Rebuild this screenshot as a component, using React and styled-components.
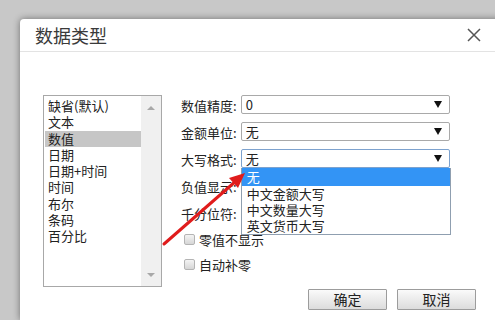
import React from "react";
import styled, { createGlobalStyle } from "styled-components";

const Global = createGlobalStyle`
  html, body { margin: 0; padding: 0; }
  body {
    background: #c8c8c8;
    overflow: hidden;
    width: 495px;
    height: 320px;
    font-family: "Noto Sans CJK SC", "Noto Sans", sans-serif;
    color: #333;
  }
`;

const Page = styled.div`
  position: relative;
  padding: 19px 0 0 20px;
  width: 495px;
  height: 320px;
  box-sizing: border-box;
  overflow: hidden;
`;

const Dialog = styled.div`
  width: 490px;
  height: 301px;
  background: #fff;
  border-radius: 4px 0 0 0;
  box-shadow: 0 0 7px rgba(0, 0, 0, 0.45);
  display: flex;
  flex-direction: column;
`;

const TitleBar = styled.div`
  height: 33px;
  box-sizing: border-box;
  border-bottom: 1px solid #e3e3e3;
  display: flex;
  align-items: center;
  justify-content: space-between;
  padding: 0 29px 0 15px;
`;

const Title = styled.div`
  font-size: 18px;
  color: #3a3a3a;
  line-height: 1;
  margin-top: -1px;
`;

const Close = styled.svg`
  width: 14px;
  height: 14px;
  display: block;
`;

const Body = styled.div`
  display: flex;
  padding: 43px 0 0 23px;
  gap: 18px;
`;

const ListBox = styled.div`
  width: 119px;
  height: 192px;
  box-sizing: border-box;
  border: 1px solid #a8a8a8;
  display: flex;
`;

const Items = styled.div`
  flex: 1;
  padding: 2px 0 0 1px;
`;

const Item = styled.div`
  height: 16.3px;
  line-height: 16.3px;
  font-size: 13px;
  padding-left: 3px;
  color: #222;
  background: ${(p) => (p.$selected ? "#c6c6c6" : "transparent")};
  white-space: nowrap;
`;

const Scroll = styled.div`
  width: 20px;
  background: #f0f0f0;
  display: flex;
  flex-direction: column;
  justify-content: space-between;
  align-items: center;
  padding: 10px 0 9px;
  box-sizing: border-box;
`;

const Tri = styled.div`
  width: 0;
  height: 0;
  border-left: 4px solid transparent;
  border-right: 4px solid transparent;
  ${(p) =>
    p.$up
      ? "border-bottom: 4px solid #a8a8a8;"
      : "border-top: 4px solid #a8a8a8;"}
`;

const Right = styled.div`
  display: flex;
  flex-direction: column;
  width: 270px;
`;

const Row = styled.div`
  display: flex;
  align-items: center;
  height: 19px;
  margin-bottom: 8px;
`;

const Label = styled.div`
  width: 60px;
  font-size: 13px;
  color: #222;
  padding-left: 1px;
  padding-top: 2px;
  white-space: nowrap;
`;

const SelectWrap = styled.div`
  position: relative;
  width: 210px;
  height: 19px;
`;

const Select = styled.div`
  height: 19px;
  box-sizing: border-box;
  border: 1px solid ${(p) => (p.$focus ? "#7da2ce" : "#a9a9a9")};
  border-radius: 2px;
  display: flex;
  align-items: center;
  justify-content: space-between;
  padding: 0 7px 0 4px;
  font-size: 13px;
  color: #222;
  background: #fff;
`;

const Caret = styled.div`
  width: 0;
  height: 0;
  border-left: 4px solid transparent;
  border-right: 4px solid transparent;
  border-top: 7px solid #111;
`;

const DropList = styled.div`
  position: absolute;
  left: 0;
  top: 19px;
  width: 210px;
  box-sizing: border-box;
  border: 1px solid #8f9fb0;
  border-top: none;
  background: #fff;
  z-index: 2;
`;

const DropItem = styled.div`
  height: ${(p) => (p.$active ? "18px" : "16px")};
  line-height: ${(p) => (p.$active ? "18px" : "16px")};
  font-size: 13px;
  padding-left: 5px;
  color: ${(p) => (p.$active ? "#fff" : "#222")};
  background: ${(p) => (p.$active ? "#3394f5" : "transparent")};
`;

const CheckRow = styled.label`
  display: flex;
  align-items: center;
  gap: 4px;
  margin-left: 4px;
  height: 16px;
  font-size: 13px;
  color: #222;
  margin-top: ${(p) => p.$mt || 0}px;
`;

const Box = styled.span`
  width: 11px;
  height: 11px;
  box-sizing: border-box;
  border: 1px solid #b4b4b4;
  border-radius: 2px;
  background: linear-gradient(#f4f4f4, #d6d6d6);
  display: inline-block;
`;

const Footer = styled.div`
  display: flex;
  justify-content: flex-end;
  gap: 10px;
  padding: 2px 34px 0 0;
`;

const Button = styled.button`
  width: 79px;
  height: 21px;
  box-sizing: border-box;
  border: 1px solid #9c9c9c;
  border-radius: 1px;
  background: linear-gradient(#fafafa, #dcdcdc);
  font-family: "Noto Sans CJK SC", sans-serif;
  font-size: 14px;
  color: #222;
  padding: 0;
  line-height: 19px;
`;

const Arrow = styled.svg`
  position: absolute;
  left: 0;
  top: 0;
  width: 495px;
  height: 320px;
  pointer-events: none;
  z-index: 5;
`;

const types = ["缺省(默认)", "文本", "数值", "日期", "日期+时间", "时间", "布尔", "条码", "百分比"];

export default function App() {
  return (
    <>
      <Global />
      <Page>
        <Dialog>
          <TitleBar>
            <Title>数据类型</Title>
            <Close viewBox="0 0 14 14">
              <path d="M1 1 L13 13 M13 1 L1 13" stroke="#555" strokeWidth="1.5" fill="none" />
            </Close>
          </TitleBar>
          <Body>
            <ListBox>
              <Items>
                {types.map((t) => (
                  <Item key={t} $selected={t === "数值"}>
                    {t}
                  </Item>
                ))}
              </Items>
              <Scroll>
                <Tri $up />
                <Tri />
              </Scroll>
            </ListBox>
            <Right>
              <Row>
                <Label>数值精度:</Label>
                <SelectWrap>
                  <Select>
                    <span>0</span>
                    <Caret />
                  </Select>
                </SelectWrap>
              </Row>
              <Row>
                <Label>金额单位:</Label>
                <SelectWrap>
                  <Select>
                    <span>无</span>
                    <Caret />
                  </Select>
                </SelectWrap>
              </Row>
              <Row>
                <Label>大写格式:</Label>
                <SelectWrap>
                  <Select $focus>
                    <span>无</span>
                    <Caret />
                  </Select>
                  <DropList>
                    <DropItem $active>无</DropItem>
                    <DropItem>中文金额大写</DropItem>
                    <DropItem>中文数量大写</DropItem>
                    <DropItem>英文货币大写</DropItem>
                  </DropList>
                </SelectWrap>
              </Row>
              <Row>
                <Label>负值显示:</Label>
                <SelectWrap>
                  <Select>
                    <span></span>
                    <Caret />
                  </Select>
                </SelectWrap>
              </Row>
              <Row>
                <Label>千分位符:</Label>
                <SelectWrap>
                  <Select>
                    <span></span>
                    <Caret />
                  </Select>
                </SelectWrap>
              </Row>
              <CheckRow $mt={1}>
                <Box />
                零值不显示
              </CheckRow>
              <CheckRow $mt={9}>
                <Box />
                自动补零
              </CheckRow>
            </Right>
          </Body>
          <Footer>
            <Button>确定</Button>
            <Button>取消</Button>
          </Footer>
        </Dialog>
        <Arrow viewBox="0 0 495 320">
          <line x1="164" y1="244" x2="236" y2="181" stroke="#e01c1c" strokeWidth="3" strokeLinecap="round" />
          <polygon points="245,173 229,178 238,188" fill="#e01c1c" />
        </Arrow>
      </Page>
    </>
  );
}
